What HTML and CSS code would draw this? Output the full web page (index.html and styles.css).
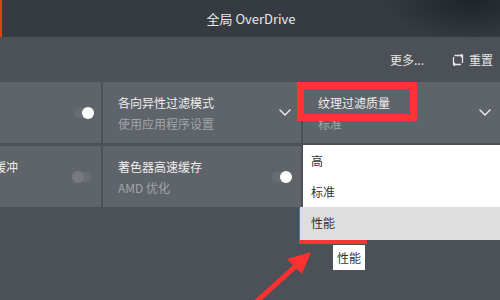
FILE: index.html
```html
<!DOCTYPE html>
<html lang="zh-CN">
<head>
    <meta charset="UTF-8">
    <title>全局 OverDrive</title>
    <link rel="stylesheet" href="styles.css">
</head>
<body>
    <div class="header">全局 OverDrive</div>

    <div class="toolbar">
        <span class="more">更多...</span>
        <span class="reset">
            <svg width="12" height="12" viewBox="0 0 12 12"><path d="M2.5 1.5 H10.5 V9 M9 10.5 H1.5 V3 M9 0 L10.5 1.5 L9 3 M3 9 L1.5 10.5 L3 12" fill="none" stroke="#e6e6e6" stroke-width="1.3"/></svg>
            重置
        </span>
    </div>

    <div class="grid">
        <div class="card">
            <div class="text"></div>
            <div class="toggle on"><span class="knob"></span></div>
        </div>
        <div class="card">
            <div class="text">
                <div class="title">各向异性过滤模式</div>
                <div class="sub">使用应用程序设置</div>
            </div>
            <svg class="chevron" width="12" height="7" viewBox="0 0 12 7"><path d="M0.5 0.5 L6 6 L11.5 0.5" fill="none" stroke="#eee" stroke-width="1.4"/></svg>
        </div>
        <div class="card dropdown-host">
            <div class="text">
                <div class="title">纹理过滤质量</div>
                <div class="sub">标准</div>
            </div>
            <svg class="chevron" width="12" height="7" viewBox="0 0 12 7"><path d="M0.5 0.5 L6 6 L11.5 0.5" fill="none" stroke="#eee" stroke-width="1.4"/></svg>
            <div class="menu">
                <div class="item">高</div>
                <div class="item">标准</div>
                <div class="item hover">性能</div>
            </div>
        </div>

        <div class="card">
            <div class="text">
                <div class="title clip">缓冲</div>
                <div class="sub">&nbsp;</div>
            </div>
            <div class="toggle off"><span class="knob"></span></div>
        </div>
        <div class="card">
            <div class="text">
                <div class="title">著色器高速缓存</div>
                <div class="sub">AMD 优化</div>
            </div>
            <div class="toggle on"><span class="knob"></span></div>
        </div>
        <div class="card"></div>
    </div>

    <div class="tip">性能</div>

    <div class="mark mark-title"></div>
    <div class="mark mark-item"></div>
    <svg class="arrow" width="500" height="300" viewBox="0 0 500 300">
        <line x1="256" y1="302" x2="298" y2="264" stroke="#ff3030" stroke-width="5"/>
        <polygon points="311,252 287,259 302,274" fill="#ff3030"/>
    </svg>
</body>
</html>
```

FILE: styles.css
```css
* { margin: 0; padding: 0; box-sizing: border-box; }
body {
    width: 500px; height: 300px; overflow: hidden;
    position: relative;
    background: #4b5157;
    font-family: "Noto Sans CJK SC", "Noto Sans", sans-serif;
    font-size: 12px;
    color: #ececec;
}

.header {
    height: 37px;
    display: flex; align-items: center; justify-content: center;
    font-size: 13px;
    color: #e9eaeb;
    background: radial-gradient(ellipse 90px 40px at 470px 0, #1e222a 0%, rgba(30,34,42,0) 100%), #363b41;
    border-left: 2px solid #dc421c;
}

.toolbar {
    height: 45px;
    display: flex; align-items: center; justify-content: flex-end;
    padding-right: 7px;
    gap: 28px;
    color: #e6e6e6;
}
.reset { display: flex; align-items: center; gap: 5px; }

.grid {
    display: grid;
    grid-template-columns: 198px 198px 198px;
    grid-template-rows: 61px 61px;
    gap: 3px 2px;
    margin-left: -97px;
}
.card {
    background: #5f646b;
    display: flex; align-items: center;
    padding: 0 9px 0 15px;
}
.card .text { flex: 1; line-height: 21px; }
.title { color: #eeeeee; }
.title.clip { margin-left: 76px; }
.sub { color: #a0a4a9; }
.chevron { flex: none; margin-right: 1px; }

.toggle {
    width: 20px; height: 10px;
    border-radius: 5px;
    background: #686d73;
    position: relative;
    flex: none;
}
.knob {
    position: absolute; top: -1px;
    width: 12px; height: 12px; border-radius: 50%;
}
.toggle.on .knob { right: 0; background: #fff; }
.toggle.off .knob { left: 0; background: #767a80; }
.card:first-child .toggle { margin-right: -2px; }
.card:nth-child(4) .toggle { margin-right: 0; }

.dropdown-host { position: relative; }
.menu {
    position: absolute;
    left: 0; right: 0; top: calc(100% + 2px);
    background: #fff;
    color: #333;
    z-index: 2;
}
.menu .item { height: 31px; line-height: 31px; padding-left: 8px; }
.menu .item.hover { background: #dedede; height: 33px; margin-left: -3px; padding-left: 11px; }

.tip {
    position: absolute; left: 333px; top: 245px;
    background: #fff; color: #333;
    padding: 3px 4px; line-height: 19px;
}

.mark { position: absolute; border: 7px solid #fb3434; }
.mark-title { left: 297px; top: 82px; width: 120px; height: 39px; }
.mark-item { left: 299px; top: 208px; width: 68px; height: 36px; }
.arrow { position: absolute; left: 0; top: 0; }
```
